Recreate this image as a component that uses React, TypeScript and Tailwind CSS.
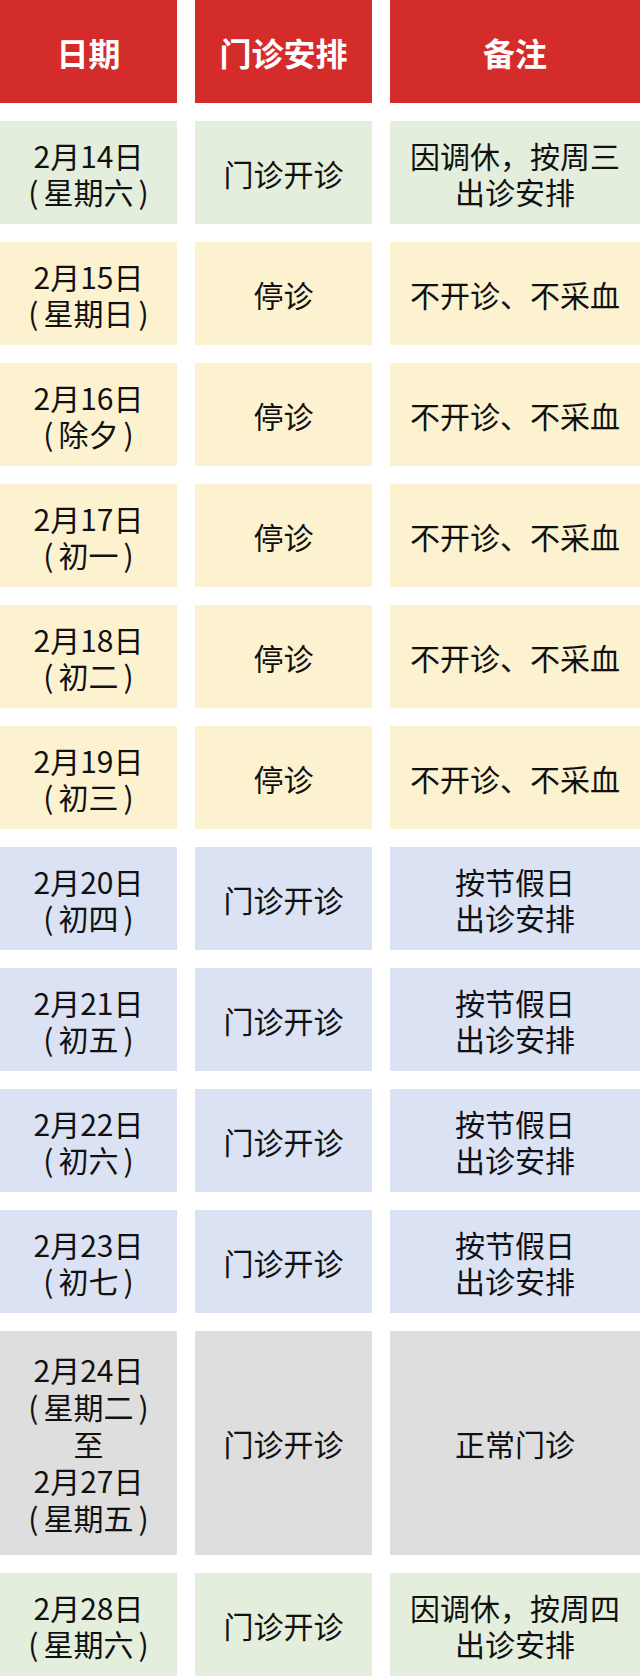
import React from 'react';

type Row = {
  date: string[];
  plan: string;
  note: string[];
  tone: 'green' | 'yellow' | 'blue' | 'gray';
  tall?: boolean;
};

const rows: Row[] = [
  { date: ['2月14日', '(星期六)'], plan: '门诊开诊', note: ['因调休，按周三', '出诊安排'], tone: 'green' },
  { date: ['2月15日', '(星期日)'], plan: '停诊', note: ['不开诊、不采血'], tone: 'yellow' },
  { date: ['2月16日', '(除夕)'], plan: '停诊', note: ['不开诊、不采血'], tone: 'yellow' },
  { date: ['2月17日', '(初一)'], plan: '停诊', note: ['不开诊、不采血'], tone: 'yellow' },
  { date: ['2月18日', '(初二)'], plan: '停诊', note: ['不开诊、不采血'], tone: 'yellow' },
  { date: ['2月19日', '(初三)'], plan: '停诊', note: ['不开诊、不采血'], tone: 'yellow' },
  { date: ['2月20日', '(初四)'], plan: '门诊开诊', note: ['按节假日', '出诊安排'], tone: 'blue' },
  { date: ['2月21日', '(初五)'], plan: '门诊开诊', note: ['按节假日', '出诊安排'], tone: 'blue' },
  { date: ['2月22日', '(初六)'], plan: '门诊开诊', note: ['按节假日', '出诊安排'], tone: 'blue' },
  { date: ['2月23日', '(初七)'], plan: '门诊开诊', note: ['按节假日', '出诊安排'], tone: 'blue' },
  {
    date: ['2月24日', '(星期二)', '至', '2月27日', '(星期五)'],
    plan: '门诊开诊',
    note: ['正常门诊'],
    tone: 'gray',
    tall: true,
  },
  { date: ['2月28日', '(星期六)'], plan: '门诊开诊', note: ['因调休，按周四', '出诊安排'], tone: 'green' },
];

const toneClass = {
  green: 'bg-[#e4eedc]',
  yellow: 'bg-[#fdf2d0]',
  blue: 'bg-[#dae2f3]',
  gray: 'bg-[#dedede]',
};

// half-width parens sit a little apart from the text in the picture
function Line({ text }: { text: string }) {
  if (text.startsWith('(') && text.endsWith(')')) {
    return (
      <>
        <span className="mr-[5px]">(</span>
        {text.slice(1, -1)}
        <span className="ml-[5px]">)</span>
      </>
    );
  }
  return <>{text}</>;
}

function Cell({ lines, tone, tall }: { lines: string[]; tone: Row['tone']; tall?: boolean }) {
  return (
    <div
      className={`${toneClass[tone]} ${tall ? 'h-[224px]' : 'h-[103px]'} flex flex-col items-center justify-center text-center`}
    >
      {lines.map((l, i) => (
        <div key={i} className={tall ? 'leading-[37px]' : 'leading-[36px]'}>
          <Line text={l} />
        </div>
      ))}
    </div>
  );
}

export default function App() {
  return (
    <div
      className="w-[640px] h-[1677px] overflow-hidden bg-white text-[30px] text-[#111]"
      style={{ fontFamily: '"Noto Sans CJK SC", "Noto Sans", sans-serif' }}
    >
      <div className="grid grid-cols-[177px_177px_1fr] gap-[18px]">
        {['日期', '门诊安排', '备注'].map((h) => (
          <div
            key={h}
            className="h-[103px] bg-[#d42b2b] flex items-center justify-center text-white font-bold text-[32px]"
          >
            {h}
          </div>
        ))}
        {rows.map((r, i) => (
          <React.Fragment key={i}>
            <Cell lines={r.date} tone={r.tone} tall={r.tall} />
            <Cell lines={[r.plan]} tone={r.tone} tall={r.tall} />
            <Cell lines={r.note} tone={r.tone} tall={r.tall} />
          </React.Fragment>
        ))}
      </div>
    </div>
  );
}
